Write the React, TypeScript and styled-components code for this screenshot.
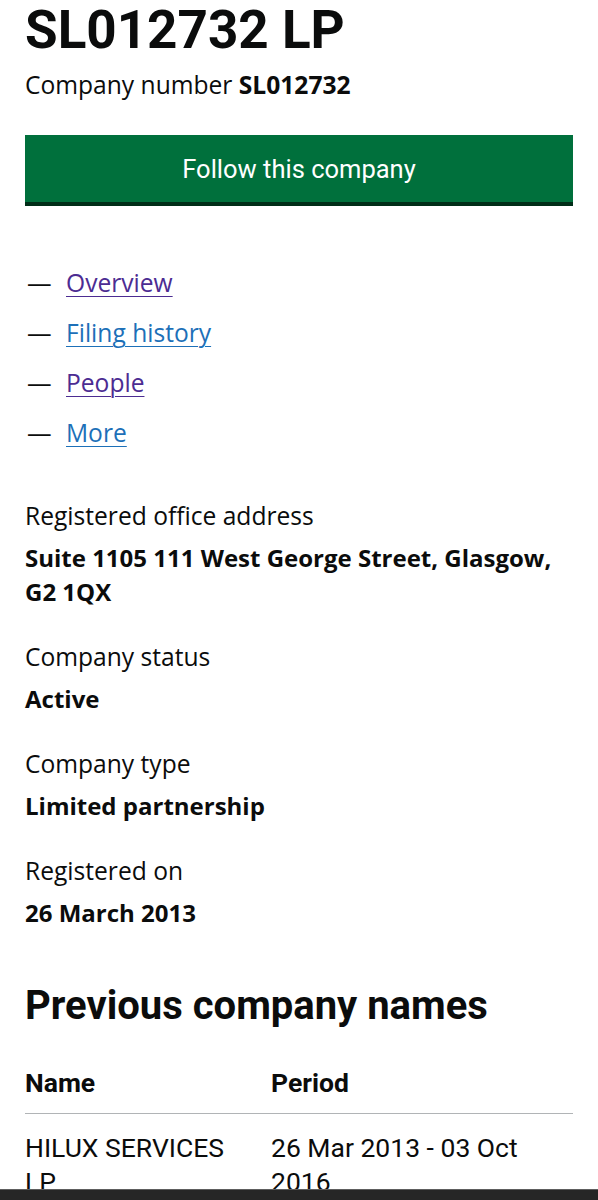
import React from "react";
import styled, { createGlobalStyle } from "styled-components";

const GlobalStyle = createGlobalStyle`
  body {
    margin: 0;
    background: #ffffff;
    color: #0b0c0c;
    font-family: "Open Sans", "Noto Sans", sans-serif;
  }
`;

const Page = styled.main`
  padding: 0 25px;
`;

const Title = styled.h1`
  margin: 0;
  font-family: Roboto, sans-serif;
  font-weight: 700;
  font-size: 53px;
  line-height: 60px;
`;

const CompanyNumber = styled.p`
  margin: 10px 0 0;
  font-size: 24.6px;
  line-height: 30px;

  strong {
    font-weight: 700;
  }
`;

const FollowButton = styled.button`
  display: block;
  width: 100%;
  height: 67px;
  margin-top: 35px;
  border: 0;
  border-radius: 0;
  background: #00703c;
  box-shadow: 0 4px 0 #002d18;
  color: #ffffff;
  font-family: Roboto, sans-serif;
  font-size: 25.5px;
  cursor: pointer;
`;

const NavList = styled.ul`
  list-style: none;
  margin: 66px 0 0;
  padding: 0;
`;

const NavItem = styled.li`
  display: flex;
  font-size: 24.6px;
  line-height: 30px;
  margin-bottom: 20px;
`;

const Dash = styled.span`
  width: 41px;
  flex-shrink: 0;
  padding-left: 2px;
  box-sizing: border-box;
`;

const NavLink = styled.a<{ $visited?: boolean }>`
  color: ${(p) => (p.$visited ? "#4c2c92" : "#1d70b8")};
  text-decoration: underline;
  text-decoration-thickness: 1px;
  text-underline-offset: 4px;
`;

const Summary = styled.dl`
  margin: 53px 0 0;
`;

const Field = styled.div`
  margin-bottom: 33px;
`;

const Label = styled.dt`
  font-size: 24.6px;
  line-height: 30px;
`;

const Value = styled.dd`
  margin: 10px 0 0;
  font-size: 24px;
  line-height: 34px;
  font-weight: 700;
`;

const SectionHeading = styled.h2`
  margin: 52px 0 0;
  font-family: Roboto, sans-serif;
  font-weight: 700;
  font-size: 40px;
  line-height: 48px;
`;

const Table = styled.table`
  width: 100%;
  margin-top: 28px;
  border-collapse: collapse;
  table-layout: fixed;
  font-family: Roboto, sans-serif;
  font-size: 26.5px;
`;

const HeadCell = styled.th`
  text-align: left;
  font-weight: 700;
  line-height: 30px;
  padding: 10px 20px 15px 0;
  border-bottom: 1px solid #b1b4b6;
`;

const Cell = styled.td`
  vertical-align: top;
  line-height: 34px;
  padding: 17px 20px 10px 0;
`;

const BottomBar = styled.div`
  position: fixed;
  left: 0;
  right: 0;
  bottom: 0;
  height: 10px;
  background: #262626;
  border-top: 1px solid #5e5e5e;
`;

const navLinks = [
  { label: "Overview", visited: true },
  { label: "Filing history", visited: false },
  { label: "People", visited: true },
  { label: "More", visited: false },
];

const fields = [
  { label: "Registered office address", value: "Suite 1105 111 West George Street, Glasgow, G2 1QX" },
  { label: "Company status", value: "Active" },
  { label: "Company type", value: "Limited partnership" },
  { label: "Registered on", value: "26 March 2013" },
];

export default function App() {
  return (
    <>
      <GlobalStyle />
      <Page>
        <Title>SL012732 LP</Title>
        <CompanyNumber>
          Company number <strong>SL012732</strong>
        </CompanyNumber>
        <FollowButton>Follow this company</FollowButton>

        <NavList>
          {navLinks.map((l) => (
            <NavItem key={l.label}>
              <Dash>—</Dash>
              <NavLink href="#" $visited={l.visited}>
                {l.label}
              </NavLink>
            </NavItem>
          ))}
        </NavList>

        <Summary>
          {fields.map((f) => (
            <Field key={f.label}>
              <Label>{f.label}</Label>
              <Value>{f.value}</Value>
            </Field>
          ))}
        </Summary>

        <SectionHeading>Previous company names</SectionHeading>
        <Table>
          <colgroup>
            <col style={{ width: "246px" }} />
            <col />
          </colgroup>
          <thead>
            <tr>
              <HeadCell>Name</HeadCell>
              <HeadCell>Period</HeadCell>
            </tr>
          </thead>
          <tbody>
            <tr>
              <Cell>HILUX SERVICES LP</Cell>
              <Cell>26 Mar 2013 - 03 Oct 2016</Cell>
            </tr>
          </tbody>
        </Table>
      </Page>
      <BottomBar />
    </>
  );
}
